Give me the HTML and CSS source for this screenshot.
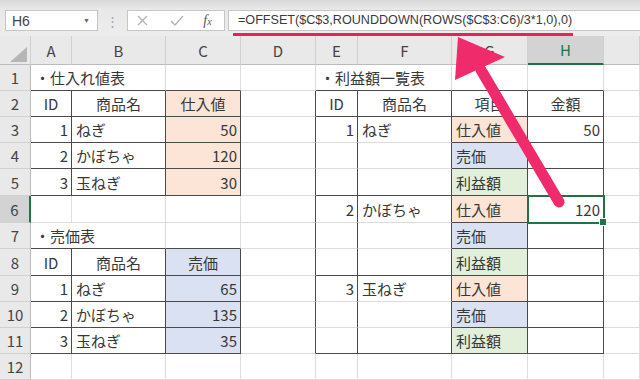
FILE: index.html
```html
<!DOCTYPE html>
<html lang="ja">
<head>
    <meta charset="utf-8">
    <title>利益額一覧表</title>
    <meta name="viewport" content="width=device-width, initial-scale=1">
    <link rel="stylesheet" href="styles.css">
</head>
<body>
    <div class="ribbon">
        <div class="namebox"><span>H6</span><span class="drop">&#9660;</span></div>
        <div class="grip">&#8942;</div>
        <div class="fxbtns">
            <span class="cancel"><svg width="11" height="11" viewBox="0 0 11 11"><path d="M1 1 L10 10 M10 1 L1 10" stroke="#b2b2b2" stroke-width="1.3" fill="none"/></svg></span>
            <span class="enter"><svg width="14" height="11" viewBox="0 0 14 11"><path d="M1 6 L5 10 L13 1" stroke="#b2b2b2" stroke-width="1.3" fill="none"/></svg></span>
            <span class="fx">f<small>x</small></span>
        </div>
        <div class="formula"><span class="text">=OFFSET($C$3,ROUNDDOWN(ROWS($C$3:C6)/3*1,0),0)</span></div>
    </div>

    <div class="sheet">
        <!-- column headers -->
        <div class="hd corner"><svg width="17" height="15" viewBox="0 0 17 15"><polygon points="17,0 17,15 0,15" fill="#b6b6b6"/></svg></div>
        <div class="hd">A</div>
        <div class="hd">B</div>
        <div class="hd">C</div>
        <div class="hd">D</div>
        <div class="hd">E</div>
        <div class="hd">F</div>
        <div class="hd">G</div>
        <div class="hd on">H</div>
        <div class="hd"></div>

        <!-- 1 -->
        <div class="rh">1</div>
        <div class="span2 b">・仕入れ値表</div>
        <div class="b"></div>
        <div></div>
        <div class="span2 b">・利益額一覧表</div>
        <div class="b"></div>
        <div class="b"></div>
        <div></div>

        <!-- 2 -->
        <div class="rh">2</div>
        <div class="ctr r b">ID</div>
        <div class="ctr r b">商品名</div>
        <div class="ctr r b or">仕入値</div>
        <div class="r"></div>
        <div class="ctr r b">ID</div>
        <div class="ctr r b">商品名</div>
        <div class="ctr r b">項目</div>
        <div class="ctr r b">金額</div>
        <div></div>

        <!-- 3 -->
        <div class="rh">3</div>
        <div class="num r b">1</div>
        <div class="r b">ねぎ</div>
        <div class="num r b or">50</div>
        <div class="r"></div>
        <div class="num r">1</div>
        <div class="r">ねぎ</div>
        <div class="r b or">仕入値</div>
        <div class="num r b">50</div>
        <div></div>

        <!-- 4 -->
        <div class="rh">4</div>
        <div class="num r b">2</div>
        <div class="r b">かぼちゃ</div>
        <div class="num r b or">120</div>
        <div class="r"></div>
        <div class="r"></div>
        <div class="r"></div>
        <div class="r b bl">売価</div>
        <div class="r b"></div>
        <div></div>

        <!-- 5 -->
        <div class="rh">5</div>
        <div class="num r b">3</div>
        <div class="r b">玉ねぎ</div>
        <div class="num r b or">30</div>
        <div class="r"></div>
        <div class="r b"></div>
        <div class="r b"></div>
        <div class="r b gr">利益額</div>
        <div class="r b"></div>
        <div></div>

        <!-- 6 -->
        <div class="rh on">6</div>
        <div></div>
        <div></div>
        <div></div>
        <div class="r"></div>
        <div class="num r">2</div>
        <div class="r">かぼちゃ</div>
        <div class="r b or">仕入値</div>
        <div class="num r b sel">120</div>
        <div></div>

        <!-- 7 -->
        <div class="rh">7</div>
        <div class="span2 b">・売価表</div>
        <div class="b"></div>
        <div class="r"></div>
        <div class="r"></div>
        <div class="r"></div>
        <div class="r b bl">売価</div>
        <div class="r b"></div>
        <div></div>

        <!-- 8 -->
        <div class="rh">8</div>
        <div class="ctr r b">ID</div>
        <div class="ctr r b">商品名</div>
        <div class="ctr r b bl">売価</div>
        <div class="r"></div>
        <div class="r b"></div>
        <div class="r b"></div>
        <div class="r b gr">利益額</div>
        <div class="r b"></div>
        <div></div>

        <!-- 9 -->
        <div class="rh">9</div>
        <div class="num r b">1</div>
        <div class="r b">ねぎ</div>
        <div class="num r b bl">65</div>
        <div class="r"></div>
        <div class="num r">3</div>
        <div class="r">玉ねぎ</div>
        <div class="r b or">仕入値</div>
        <div class="r b"></div>
        <div></div>

        <!-- 10 -->
        <div class="rh">10</div>
        <div class="num r b">2</div>
        <div class="r b">かぼちゃ</div>
        <div class="num r b bl">135</div>
        <div class="r"></div>
        <div class="r"></div>
        <div class="r"></div>
        <div class="r b bl">売価</div>
        <div class="r b"></div>
        <div></div>

        <!-- 11 -->
        <div class="rh">11</div>
        <div class="num r b">3</div>
        <div class="r b">玉ねぎ</div>
        <div class="num r b bl">35</div>
        <div class="r"></div>
        <div class="r b"></div>
        <div class="r b"></div>
        <div class="r b gr">利益額</div>
        <div class="r b"></div>
        <div></div>

        <!-- 12 -->
        <div class="rh">12</div>
        <div></div>
        <div></div>
        <div></div>
        <div></div>
        <div></div>
        <div></div>
        <div></div>
        <div></div>
        <div></div>
    </div>

    <!-- annotation arrow pointing at the formula -->
    <svg class="arrow" width="640" height="380" viewBox="0 0 640 380">
        <line x1="481" y1="70" x2="559" y2="202" stroke="#ef2b6c" stroke-width="11" stroke-linecap="round"/>
        <polygon points="458,37 505,57 455,80" fill="#ef2b6c"/>
    </svg>
</body>
</html>
```

FILE: styles.css
```css
* {
    box-sizing: border-box;
}

body {
    margin: 0;
    width: 640px;
    height: 380px;
    overflow: hidden;
    position: relative;
    background: #fff;
    font-family: "Noto Sans CJK JP", sans-serif;
}

/* formula bar */
.ribbon {
    height: 36px;
    display: flex;
    align-items: flex-start;
    padding: 10px 0 0 5px;
    background: linear-gradient(#d8d8d8, #e8e8e8 9px, #ededed);
}

.namebox {
    width: 93px;
    height: 21px;
    background: #fff;
    border: 1px solid #c6c6c6;
    display: flex;
    align-items: center;
    justify-content: space-between;
    padding: 0 7px 0 6px;
    font: 14px "Liberation Sans", sans-serif;
    color: #444;
}

.drop {
    font-size: 7px;
    color: #666;
}

.grip {
    width: 29px;
    text-align: center;
    color: #a8a8a8;
    font-size: 13px;
    line-height: 21px;
}

.fxbtns {
    width: 98px;
    height: 21px;
    background: #fff;
    border: 1px solid #c6c6c6;
    display: flex;
    align-items: center;
}

.fxbtns span {
    display: flex;
    justify-content: center;
}

.cancel {
    width: 29px;
}

.enter {
    width: 40px;
}

.fx {
    width: 21px;
    font: italic 14px "Liberation Serif", serif;
    color: #555;
}

.fx small {
    font-size: 10px;
    margin-top: 3px;
}

.formula {
    flex: 1;
    margin-left: 3px;
    height: 21px;
    background: #fff;
    border: 1px solid #c6c6c6;
    border-right: none;
    padding-left: 9px;
    font: 12.6px/19px "Liberation Sans", sans-serif;
    color: #3a3a3a;
}

.formula .text {
    position: relative;
}

.formula .text::after {
    content: "";
    position: absolute;
    left: -5px;
    right: -1px;
    top: 20px;
    height: 3px;
    background: #e8205c;
}

/* worksheet */
.sheet {
    display: grid;
    grid-template-columns: 31px 41px 94px 75px 75px 42px 94px 76px 76px 36px;
    grid-template-rows: 29px 26px 26px 26px 26px 27px 27px 26px 27px 26px 26px 26px 26px;
    font-size: 15px;
    color: #383838;
}

.sheet > div {
    display: flex;
    align-items: center;
    padding: 0 4px;
    white-space: nowrap;
    border-right: 1px solid #dcdcdc;
    border-bottom: 1px solid #dcdcdc;
}

.sheet > .hd {
    justify-content: center;
    background: #e9e9e9;
    color: #444;
    border-right-color: #d0d0d0;
    border-bottom-color: #bcbcbc;
}

.sheet > .corner {
    align-items: flex-end;
    justify-content: flex-end;
    padding: 0 3px 2px 0;
}

.sheet > .rh {
    justify-content: center;
    padding: 0;
    background: #e9e9e9;
    color: #444;
    border-right-color: #bcbcbc;
    border-bottom-color: #d0d0d0;
}

.sheet > .hd.on {
    background: #d3d3d3;
    color: #217346;
    border-bottom: 2px solid #217346;
}

.sheet > .rh.on {
    background: #d3d3d3;
    border-right: 2px solid #217346;
}

.span2 {
    grid-column: span 2;
}

.ctr {
    justify-content: center;
}

.sheet > .num {
    justify-content: flex-end;
    padding-right: 3px;
}

.sheet > .r {
    border-right-color: #4a4a4a;
}

.sheet > .b {
    border-bottom-color: #4a4a4a;
}

.or {
    background: #fce4d6;
}

.bl {
    background: #d9e1f2;
}

.gr {
    background: #e2efda;
}

.sel {
    position: relative;
    outline: 2px solid #217346;
    outline-offset: -1px;
}

.sel::after {
    content: "";
    position: absolute;
    right: -4px;
    bottom: -4px;
    width: 6px;
    height: 6px;
    background: #217346;
    border: 1px solid #fff;
}

.arrow {
    position: absolute;
    top: 0;
    left: 0;
    pointer-events: none;
}
```
